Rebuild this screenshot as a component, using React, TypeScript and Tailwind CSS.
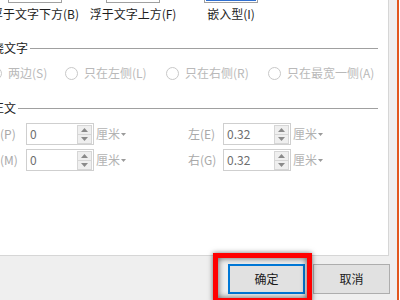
import React from 'react';

const font = { fontFamily: '"Noto Sans CJK SC", "Liberation Sans", sans-serif' };

function WrapItem({ label, selected }: { label: string; selected?: boolean }) {
  return (
    <div className="flex w-[98px] flex-col items-center">
      <div
        className={
          selected
            ? 'mt-[-37px] h-[40px] w-[54px] border border-[#a0a0a0] p-px'
            : 'mt-[-37px] h-[40px] w-[54px] border border-[#a0a0a0]'
        }
      >
        {selected && <div className="h-full w-full border-2 border-[#2f6fd0]" />}
      </div>
      <div className="mt-[3px] whitespace-nowrap text-[12px] leading-[16px] text-[#1e1e1e]">{label}</div>
    </div>
  );
}

function Radio({ label, className }: { label: string; className: string }) {
  return (
    <div className={`flex items-center gap-[6px] ${className}`}>
      <span className="h-[13px] w-[13px] shrink-0 rounded-full border border-[#c8c8c8] bg-white" />
      <span className="whitespace-nowrap text-[#b9b9b9]">{label}</span>
    </div>
  );
}

function SpinInput({ value }: { value: string }) {
  return (
    <div className="flex h-[22px] w-[68px] items-center justify-between border border-[#cfcfcf] bg-white">
      <span className="pl-[3px] text-[12px] text-[#6e6e6e]">{value}</span>
      <div className="mr-px flex h-[19px] w-[15px] flex-col border border-[#d6d6d6] bg-[#efefef]">
        <div className="flex flex-1 items-center justify-center border-b border-[#d6d6d6]">
          <svg width="7" height="4" viewBox="0 0 7 4">
            <path d="M0 4 L3.5 0 L7 4 Z" fill="#8a8a8a" />
          </svg>
        </div>
        <div className="flex flex-1 items-center justify-center">
          <svg width="7" height="4" viewBox="0 0 7 4">
            <path d="M0 0 L7 0 L3.5 4 Z" fill="#8a8a8a" />
          </svg>
        </div>
      </div>
    </div>
  );
}

function Unit() {
  return (
    <div className="flex items-center pl-[2px]">
      <span className="text-[#b3b3b3]">厘米</span>
      <svg width="5" height="3" viewBox="0 0 5 3" className="ml-px mt-px">
        <path d="M0 0 L5 0 L2.5 3 Z" fill="#9a9a9a" />
      </svg>
    </div>
  );
}

function Header({ text }: { text: string }) {
  return (
    <div className="flex items-center leading-[16px]">
      <span className="whitespace-nowrap text-[#222]">{text}</span>
      <div className="ml-[2px] h-px flex-1 bg-[#a0a0a0]" />
    </div>
  );
}

export default function App() {
  return (
    <div className="flex h-[300px] w-[400px] overflow-hidden bg-white text-[12px]" style={font}>
      <div className="relative flex w-[397px] flex-col bg-[#efefef]">
        <div className="h-[256px] w-[389px] overflow-hidden border-b border-r border-[#d6d6d6] bg-white">
          <div className="ml-[-20px] flex w-[398px] flex-col">
            <div className="flex pl-[6px]">
              <WrapItem label="浮于文字下方(B)" />
              <WrapItem label="浮于文字上方(F)" />
              <WrapItem label="嵌入型(I)" selected />
            </div>

            <div className="mt-[18px]">
              <Header text="环绕文字" />
            </div>

            <div className="mt-[9px] flex items-center leading-[16px]">
              <Radio label="两边(S)" className="ml-[9px] w-[76px]" />
              <Radio label="只在左侧(L)" className="w-[101px]" />
              <Radio label="只在右侧(R)" className="w-[102px]" />
              <Radio label="只在最宽一侧(A)" className="" />
            </div>

            <div className="mt-[19px]">
              <Header text="距正文" />
            </div>

            <div className="mt-[7px] flex flex-col gap-[4px]">
              <div className="flex items-center">
                <span className="ml-[8px] w-[38px] text-[#a9a9a9]">上(P)</span>
                <SpinInput value="0" />
                <div className="w-[94px]">
                  <Unit />
                </div>
                <span className="w-[35px] text-[#a9a9a9]">左(E)</span>
                <SpinInput value="0.32" />
                <Unit />
              </div>
              <div className="flex items-center">
                <span className="ml-[8px] w-[38px] text-[#a9a9a9]">下(M)</span>
                <SpinInput value="0" />
                <div className="w-[94px]">
                  <Unit />
                </div>
                <span className="w-[35px] text-[#a9a9a9]">右(G)</span>
                <SpinInput value="0.32" />
                <Unit />
              </div>
            </div>
          </div>
        </div>

        <div className="flex justify-end gap-[8px] pr-[7px] pt-[8px]">
          <button className="flex h-[30px] w-[77px] items-center justify-center border-2 border-[#0078d7] bg-[#e1e1e1] text-[#1a1a1a]">
            确定
          </button>
          <button className="flex h-[30px] w-[77px] items-center justify-center border border-[#adadad] bg-[#e1e1e1] text-[#1a1a1a]">
            取消
          </button>
        </div>

        {/* red highlight annotation */}
        <div className="absolute left-[213px] top-[253px] h-[50px] w-[99px] border-[5px] border-[#ff0000] shadow-[0_0_5px_rgba(0,0,0,0.55),inset_0_0_6px_rgba(0,0,0,0.65)]" />
      </div>
      <div className="w-[2px] bg-[#e2571e]" />
      <div className="w-px bg-white" />
    </div>
  );
}
